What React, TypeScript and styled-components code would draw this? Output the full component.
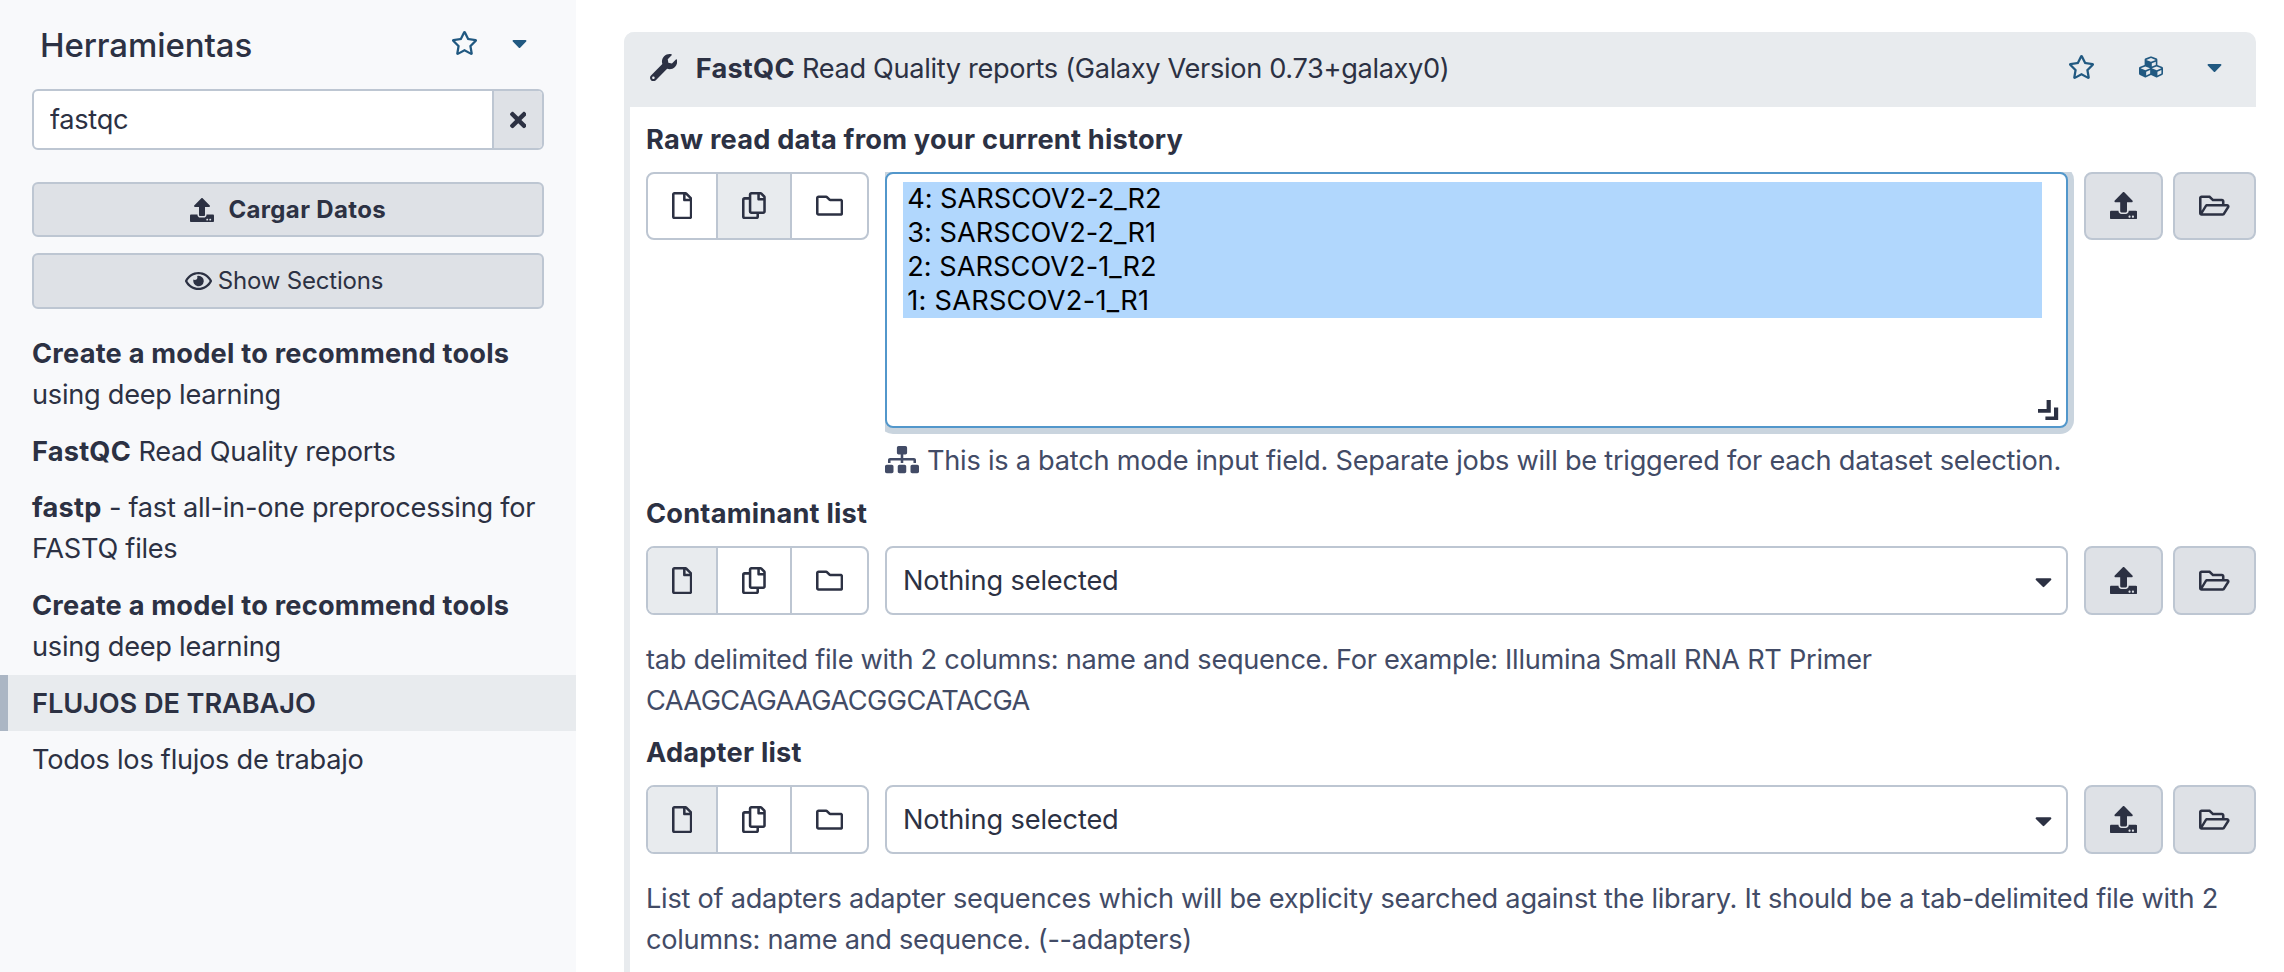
import React from "react";
import styled, { createGlobalStyle } from "styled-components";
import {
  FaCaretDown,
  FaCubes,
  FaRegCopy,
  FaRegEye,
  FaRegFile,
  FaRegFolder,
  FaRegFolderOpen,
  FaRegStar,
  FaSitemap,
  FaTimes,
  FaUpload,
  FaWrench,
} from "react-icons/fa";

const color = {
  text: "#2c3143",
  muted: "#424b66",
  link: "#215981",
  border: "#bdc6d2",
  button: "#dee1e6",
  panel: "#f8f9fb",
  header: "#e8ebee",
  focus: "#5297cb",
  glow: "#c9d4de",
  selection: "#b1d7fd",
};

const GlobalStyle = createGlobalStyle`
  * { box-sizing: border-box; }
  body {
    margin: 0;
    background: #ffffff;
    color: ${color.text};
    font: 400 27.2px/40.8px Inter, "Liberation Sans", sans-serif;
    letter-spacing: -0.27px;
    overflow: hidden;
  }
  /* Glyphs keep the advance width of their own view box. */
  svg { display: block; flex: none; width: 1em; height: 1em; }
  svg[viewBox="0 0 320 512"] { width: 0.625em; }
  svg[viewBox="0 0 352 512"] { width: 0.6875em; }
  svg[viewBox="0 0 384 512"] { width: 0.75em; }
  svg[viewBox="0 0 448 512"] { width: 0.875em; }
  svg[viewBox="0 0 576 512"] { width: 1.125em; }
  svg[viewBox="0 0 640 512"] { width: 1.25em; }
  b { font-weight: 700; letter-spacing: 0.22px; }
`;

const Page = styled.div`
  display: flex;
  height: 972px;
  overflow: hidden;
`;

const Sidebar = styled.aside`
  flex: none;
  width: 576px;
  background: ${color.panel};
`;

const SidebarHeader = styled.div`
  display: flex;
  align-items: center;
  height: 89px;
  padding: 0 49.5px 0 40px;
  color: ${color.link};
`;

const SidebarTitle = styled.h2`
  flex: 1;
  margin: 2px 0 0;
  color: ${color.text};
  font-size: 33px;
  font-weight: 500;
  letter-spacing: -0.1px;
`;

const SidebarActions = styled.div`
  display: flex;
  align-items: center;
  gap: 33.5px;
  margin-top: -3px;
  font-size: 24px;
`;

const SearchBox = styled.div`
  display: flex;
  height: 61px;
  margin: 0 32px 32px;
  border: 2px solid ${color.border};
  border-radius: 6px;
  background: #ffffff;
  overflow: hidden;
`;

const SearchInput = styled.input`
  flex: 1;
  min-width: 0;
  padding: 2px 16px 0;
  border: 0;
  outline: 0;
  background: transparent;
  color: inherit;
  font: inherit;
  letter-spacing: -0.3px;
`;

const ClearButton = styled.button`
  display: flex;
  align-items: center;
  justify-content: center;
  width: 50px;
  padding: 0;
  border: 0;
  border-left: 2px solid ${color.border};
  background: ${color.button};
  color: inherit;
  font-size: 24px;
`;

const WideButton = styled.button<{ $strong?: boolean }>`
  display: flex;
  align-items: center;
  justify-content: center;
  gap: ${(p) => (p.$strong ? 14.5 : 6)}px;
  width: 512px;
  height: ${(p) => (p.$strong ? 55 : 56)}px;
  margin: 0 32px 16px;
  padding: ${(p) => (p.$strong ? "0" : "0 8px 0 0")};
  border: 2px solid ${color.border};
  border-radius: 6px;
  background: ${color.button};
  color: inherit;
  font: ${(p) => (p.$strong ? 700 : 400)} 24px/36px Inter, "Liberation Sans", sans-serif;
  letter-spacing: ${(p) => (p.$strong ? 0.36 : -0.19)}px;
`;

const ToolEntry = styled.div`
  padding: 9px 32px 7px;
`;

const SectionHeading = styled.div`
  padding: 9px 24px 7px;
  border-left: 8px solid #abb6c4;
  background: ${color.header};
  font-weight: 600;
  letter-spacing: -0.09px;
`;

const Main = styled.main`
  flex: none;
  width: 1680px;
  padding: 32px 0 0 48px;
`;

const ToolCard = styled.section`
  height: 960px;
  border-left: 6px solid ${color.header};
  border-radius: 10px 10px 0 0;
`;

const ToolHeader = styled.header`
  display: flex;
  align-items: center;
  height: 75px;
  margin-left: -6px;
  padding: 0 34.3px 0 26px;
  border-radius: 10px 10px 0 0;
  background: ${color.header};

  > svg { margin-top: -4px; }
`;

const ToolTitle = styled.div`
  flex: 1;
  margin: -1px 0 0 18.5px;
  letter-spacing: -0.34px;
`;

const ToolActions = styled.div`
  display: flex;
  align-items: center;
  margin-top: -5px;
  gap: 44px;
  color: ${color.link};
  font-size: 24px;
`;

const Fields = styled.div`
  padding: 12.8px 0 0 16px;
`;

const FieldLabel = styled.div`
  font-weight: 700;
  letter-spacing: 0.22px;
  margin-bottom: 11.4px;
`;

const FieldRow = styled.div<{ $height: number }>`
  display: flex;
  align-items: flex-start;

  --control-height: ${(p) => p.$height}px;
`;

const SourceSwitch = styled.div`
  display: flex;
  flex: none;
  height: var(--control-height);
  margin-right: 15.6px;
  border: 2px solid ${color.border};
  border-radius: 8px;
  background: #ffffff;
  overflow: hidden;
`;

const SourceOption = styled.button<{ $active: boolean }>`
  display: flex;
  align-items: center;
  padding: 0 24px;
  border: 0;
  background: ${(p) => (p.$active ? color.header : "transparent")};
  color: inherit;
  font-size: 27.2px;

  & + & { border-left: 2px solid ${color.border}; }
`;

const FieldControl = styled.div`
  flex: none;
  width: 1183.3px;
`;

const FocusArea = styled.div`
  width: 1189.3px;
  padding: 0 6px 6px 0;
  overflow: hidden;
`;

const MultiSelect = styled.div`
  position: relative;
  height: 256px;
  padding: 8px 24px 0 16px;
  border: 2px solid ${color.focus};
  border-radius: 8px;
  box-shadow: 0 0 0 6px ${color.glow};
  background: #ffffff;
`;

const SelectedOption = styled.div<{ $tracking: number }>`
  height: 34px;
  padding-left: 4.2px;
  background: ${color.selection};
  color: #000000;
  line-height: 34px;
  letter-spacing: ${(p) => p.$tracking}px;
`;

const ResizeHandle = styled.svg`
  position: absolute;
  right: 7.5px;
  bottom: 5.5px;
  width: 20.4px;
  height: 20.4px;
`;

const BatchNote = styled.div`
  display: flex;
  align-items: center;
  gap: 8px;
  margin: 6.6px 0 12.4px;
  color: ${color.muted};
  letter-spacing: -0.255px;
  white-space: nowrap;

  svg { margin-top: -2px; }
`;

const SelectBox = styled.div`
  display: flex;
  align-items: center;
  justify-content: space-between;
  height: var(--control-height);
  padding: 2px 14px 0 16px;
  border: 2px solid ${color.border};
  border-radius: 8px;
  background: #ffffff;
  letter-spacing: -0.15px;
`;

const DataActionGroup = styled.div`
  display: flex;
  flex: none;
  gap: 10px;
  margin-left: 16px;
`;

const IconButton = styled.button<{ $width: number }>`
  display: flex;
  align-items: center;
  justify-content: center;
  width: ${(p) => p.$width}px;
  height: var(--control-height);
  padding: 0;
  border: 2px solid ${color.border};
  border-radius: 8px;
  background: ${color.button};
  color: inherit;
  font-size: 27.2px;
`;

const HelpText = styled.p`
  margin: 25.2px 0 11.5px;
  color: ${color.muted};
  white-space: nowrap;
`;

const HelpLine = styled.span<{ $tracking: number }>`
  display: block;
  letter-spacing: ${(p) => p.$tracking}px;
`;

const DataSources = ({ active }: { active: number }) => (
  <SourceSwitch>
    {[FaRegFile, FaRegCopy, FaRegFolder].map((Icon, i) => (
      <SourceOption key={i} $active={i === active}>
        <Icon />
      </SourceOption>
    ))}
  </SourceSwitch>
);

const DataActions = () => (
  <DataActionGroup>
    <IconButton $width={79}>
      <FaUpload />
    </IconButton>
    <IconButton $width={83}>
      <FaRegFolderOpen />
    </IconButton>
  </DataActionGroup>
);

const SingleSelectField = ({ label, help }: { label: string; help: [string, number][] }) => (
  <>
    <FieldLabel>{label}</FieldLabel>
    <FieldRow $height={68.6}>
      <DataSources active={0} />
      <FieldControl>
        <SelectBox>
          Nothing selected
          <FaCaretDown />
        </SelectBox>
      </FieldControl>
      <DataActions />
    </FieldRow>
    <HelpText>
      {help.map(([line, tracking]) => (
        <HelpLine key={line} $tracking={tracking}>
          {line}
        </HelpLine>
      ))}
    </HelpText>
  </>
);

const datasets: [string, number][] = [
  ["4: SARSCOV2-2_R2", -0.03],
  ["3: SARSCOV2-2_R1", 0.02],
  ["2: SARSCOV2-1_R2", 0.02],
  ["1: SARSCOV2-1_R1", 0.25],
];

export default function App() {
  return (
    <Page>
      <GlobalStyle />
      <Sidebar>
        <SidebarHeader>
          <SidebarTitle>Herramientas</SidebarTitle>
          <SidebarActions>
            <FaRegStar />
            <FaCaretDown />
          </SidebarActions>
        </SidebarHeader>
        <SearchBox>
          <SearchInput defaultValue="fastqc" />
          <ClearButton>
            <FaTimes />
          </ClearButton>
        </SearchBox>
        <WideButton $strong>
          <FaUpload />
          Cargar Datos
        </WideButton>
        <WideButton>
          <FaRegEye />
          Show Sections
        </WideButton>
        <ToolEntry>
          <b>Create a model to recommend tools </b>using deep learning
        </ToolEntry>
        <ToolEntry>
          <b>FastQC</b> Read Quality reports
        </ToolEntry>
        <ToolEntry>
          <b>fastp</b> - fast all-in-one preprocessing for
          <br />
          FASTQ files
        </ToolEntry>
        <ToolEntry>
          <b>Create a model to recommend tools </b>using deep learning
        </ToolEntry>
        <SectionHeading>FLUJOS DE TRABAJO</SectionHeading>
        <ToolEntry>Todos los flujos de trabajo</ToolEntry>
      </Sidebar>
      <Main>
        <ToolCard>
          <ToolHeader>
            <FaWrench />
            <ToolTitle>
              <b>FastQC</b> Read Quality reports (Galaxy Version 0.73+galaxy0)
            </ToolTitle>
            <ToolActions>
              <FaRegStar />
              <FaCubes />
              <FaCaretDown />
            </ToolActions>
          </ToolHeader>
          <Fields>
            <FieldLabel>Raw read data from your current history</FieldLabel>
            <FieldRow $height={67.6}>
              <DataSources active={1} />
              <FieldControl>
                <FocusArea>
                  <MultiSelect>
                    {datasets.map(([name, tracking]) => (
                      <SelectedOption key={name} $tracking={tracking}>
                        {name}
                      </SelectedOption>
                    ))}
                    <ResizeHandle viewBox="0 0 20.4 20.4" fill={color.text}>
                      <path d="M8.6 0H12.8V12.8H0V9H8.6Z" />
                      <path d="M16 7.6H20.2V20.4H7.4V16.6H16Z" />
                    </ResizeHandle>
                  </MultiSelect>
                </FocusArea>
                <BatchNote>
                  <FaSitemap />
                  This is a batch mode input field. Separate jobs will be triggered for each dataset selection.
                </BatchNote>
              </FieldControl>
              <DataActions />
            </FieldRow>
            <SingleSelectField
              label="Contaminant list"
              help={[
                ["tab delimited file with 2 columns: name and sequence. For example: Illumina Small RNA RT Primer", -0.295],
                ["CAAGCAGAAGACGGCATACGA", -0.56],
              ]}
            />
            <SingleSelectField
              label="Adapter list"
              help={[
                [
                  "List of adapters adapter sequences which will be explicity searched against the library. It should be a tab-delimited file with 2",
                  -0.265,
                ],
                ["columns: name and sequence. (--adapters)", -0.3],
              ]}
            />
          </Fields>
        </ToolCard>
      </Main>
    </Page>
  );
}
